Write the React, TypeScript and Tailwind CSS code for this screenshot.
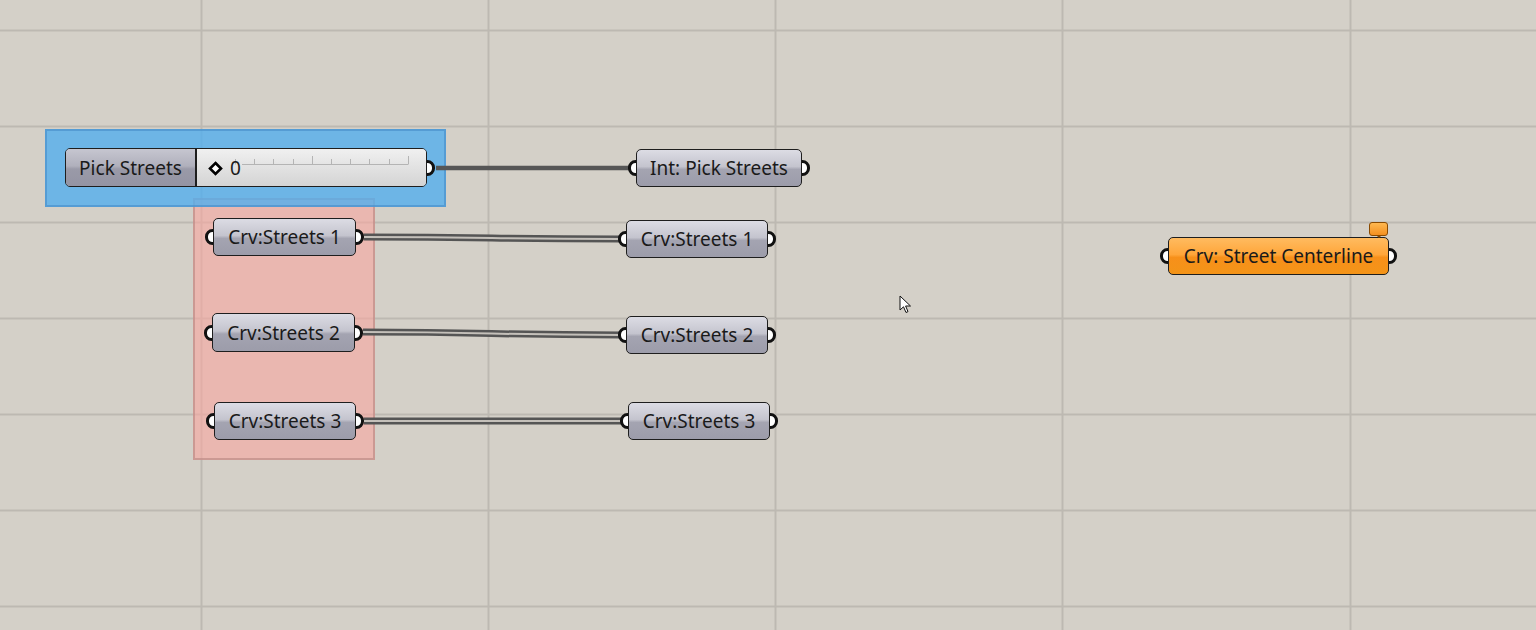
import React from "react";

const FONT = "font-['Noto_Sans','Open_Sans',sans-serif]";

function Port({ side }: { side: "l" | "r" }) {
  return (
    <div
      className={
        "absolute top-1/2 -translate-y-1/2 w-[15px] h-[16px] rounded-full border-[3px] border-[#111] bg-white " +
        (side === "l" ? "left-[-8px]" : "right-[-8px]")
      }
    />
  );
}

function Param({
  x,
  y,
  w,
  h = 38,
  label,
  orange = false,
}: {
  x: number;
  y: number;
  w: number;
  h?: number;
  label: string;
  orange?: boolean;
}) {
  return (
    <div className="absolute" style={{ left: x, top: y, width: w, height: h }}>
      <Port side="l" />
      <Port side="r" />
      <div
        className={
          "absolute inset-0 rounded-[5px] border-[1.5px] border-[#1e1e1e] flex items-center justify-center text-[19px] text-[#1a1a1a] " +
          FONT +
          " " +
          (orange
            ? "bg-[linear-gradient(180deg,#ffbb60_0%,#ffa63a_46%,#f7901a_54%,#f39418_100%)]"
            : "bg-[linear-gradient(180deg,#dcdce4_0%,#c4c4ce_46%,#a4a4b1_54%,#9c9caa_100%)]")
        }
      >
        <span className="leading-none pt-[1px] whitespace-nowrap">{label}</span>
      </div>
    </div>
  );
}

function Slider() {
  const ticks = [235, 254, 273, 293, 312, 331, 350, 369, 389, 408];
  return (
    <div className="absolute left-[65px] top-[148px] w-[362px] h-[39px]">
      <Port side="r" />
      <div className={"absolute inset-0 rounded-[5px] border-[1.5px] border-[#1e1e1e] flex overflow-hidden text-[19px] text-[#1a1a1a] " + FONT}>
        <div className="w-[131px] h-full flex items-center justify-center bg-[linear-gradient(180deg,#c6c6d0_0%,#b0b0bc_46%,#9a9aa8_54%,#9494a3_100%)] border-r-2 border-[#1e1e1e]">
          <span className="leading-none pt-[1px] whitespace-nowrap">Pick Streets</span>
        </div>
        <div className="relative flex-1 h-full bg-[linear-gradient(180deg,#f0f0f0_0%,#e2e2e2_50%,#d4d4d4_100%)]">
          <svg className="absolute inset-0" width="230" height="36">
            <line x1="45" y1="15.5" x2="211" y2="15.5" stroke="#b4b4b4" strokeWidth="1" />
            {ticks.map((t) => {
              const tx = t - 197;
              const tall = t === 312 || t === 408;
              return (
                <line
                  key={t}
                  x1={tx + 0.5}
                  y1={tall ? 7 : 10}
                  x2={tx + 0.5}
                  y2={15.5}
                  stroke="#b4b4b4"
                  strokeWidth="1"
                />
              );
            })}
            <path d="M18.5 14 L24 19.5 L18.5 25 L13 19.5 Z" fill="white" stroke="#000" strokeWidth="2.6" />
          </svg>
          <span className="absolute left-[33px] top-[10px] leading-none">0</span>
        </div>
      </div>
    </div>
  );
}

function Wire({ x1, y1, x2, y2, double = false }: { x1: number; y1: number; x2: number; y2: number; double?: boolean }) {
  const mx = (x1 + x2) / 2;
  const d = `M${x1} ${y1} C${mx} ${y1} ${mx} ${y2} ${x2} ${y2}`;
  if (!double) return <path d={d} stroke="#565656" strokeWidth="4.5" fill="none" />;
  return (
    <g>
      <path d={d} stroke="#555555" strokeWidth="7" fill="none" />
      <path d={d} stroke="#c4c0ba" strokeWidth="2" fill="none" />
    </g>
  );
}

export default function App() {
  const vlines = [201, 488, 775, 1062, 1350];
  const hlines = [30, 126, 222, 318, 414, 510, 606];
  return (
    <div className="relative w-[1536px] h-[630px] overflow-hidden bg-[#d4d0c8]">
      <svg className="absolute inset-0" width="1536" height="630">
        {vlines.map((v) => (
          <line key={v} x1={v + 0.5} y1={0} x2={v + 0.5} y2={630} stroke="#bdb9b2" strokeWidth="2" />
        ))}
        {hlines.map((h) => (
          <line key={h} x1={0} y1={h + 0.5} x2={1536} y2={h + 0.5} stroke="#bdb9b2" strokeWidth="2" />
        ))}
      </svg>

      {/* groups */}
      <div className="absolute left-[193px] top-[198px] w-[182px] h-[262px] bg-[rgba(249,166,160,0.6)] border-2 border-[rgba(190,140,135,0.7)]" />
      <div className="absolute left-[45px] top-[129px] w-[401px] h-[78px] bg-[rgba(82,174,238,0.8)] border-2 border-[rgba(70,140,200,0.6)]" />

      {/* wires */}
      <svg className="absolute inset-0" width="1536" height="630">
        <Wire x1={436} y1={168} x2={630} y2={168} />
        <Wire x1={364} y1={237} x2={620} y2={239} double />
        <Wire x1={363} y1={332} x2={620} y2={335} double />
        <Wire x1={364} y1={421} x2={622} y2={421} double />
      </svg>

      <Slider />

      <Param x={213} y={218} w={143} label="Crv:Streets 1" />
      <Param x={212} y={313} w={143} h={39} label="Crv:Streets 2" />
      <Param x={214} y={402} w={142} label="Crv:Streets 3" />

      <Param x={636} y={149} w={166} label="Int: Pick Streets" />
      <Param x={626} y={220} w={142} label="Crv:Streets 1" />
      <Param x={626} y={316} w={142} label="Crv:Streets 2" />
      <Param x={628} y={402} w={142} label="Crv:Streets 3" />

      <Param x={1168} y={237} w={221} label="Crv: Street Centerline" orange />

      {/* orange tag */}
      <div className="absolute left-[1369px] top-[222px] w-[19px] h-[14px]">
        <div className="absolute inset-0 rounded-[3px] border border-[#8a4a00] bg-[linear-gradient(180deg,#ffb850_0%,#f39020_100%)]" />
        <div className="absolute left-[7px] top-[13px] w-0 h-0 border-l-[3px] border-r-[3px] border-t-[3px] border-l-transparent border-r-transparent border-t-[#8a4a00]" />
      </div>

      {/* cursor */}
      <svg className="absolute left-[899px] top-[295px]" width="14" height="20" viewBox="0 0 14 20">
        <path d="M1 1 L1 15 L4.5 11.8 L7 17.5 L9 16.6 L6.6 11 L11.5 11 Z" fill="white" stroke="#111" strokeWidth="1" strokeLinejoin="round" />
      </svg>
    </div>
  );
}
